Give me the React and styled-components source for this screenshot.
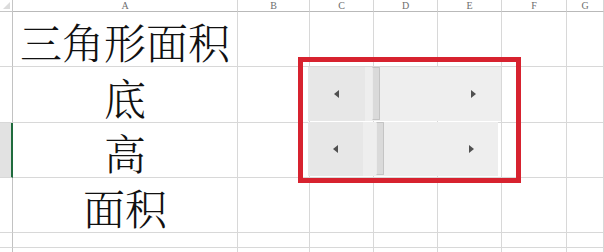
import React from 'react'
import styled, { createGlobalStyle } from 'styled-components'

const Global = createGlobalStyle`
  html, body {
    margin: 0;
    padding: 0;
    background: #fff;
  }
  * { box-sizing: border-box; }
`;

const Sheet = styled.div`
  position: relative;
  width: 604px;
  height: 252px;
  overflow: hidden;
  display: grid;
  grid-template-columns: 13px 225px 72px 64px 64px 64px 65px 1fr;
  grid-template-rows: 12px 55px 56px 55px 55px 15px 15px;
  background: #fff;
`;

const Corner = styled.div`
  display: flex;
  align-items: flex-end;
  justify-content: flex-end;
  padding: 0 2px 2px 0;
  border-right: 1px solid #c6c6c6;
  border-bottom: 1px solid #c6c6c6;
  &::after {
    content: '';
    border-left: 7px solid transparent;
    border-bottom: 7px solid #dcdcdc;
  }
`;

const ColHead = styled.div`
  border-right: 1px solid #d6d6d6;
  border-bottom: 1px solid #b9b9b9;
  font-family: "Liberation Serif", serif;
  font-size: 10px;
  line-height: 11px;
  color: #6e6e6e;
  text-align: center;
`;

const RowHead = styled.div`
  background: ${p => (p.$active ? '#e2e2e2' : '#fff')};
  border-right: ${p => (p.$active ? '2px solid #1f6b3d' : '1px solid #c2c2c2')};
  border-bottom: 1px solid #d8d8d8;
`;

const Cell = styled.div`
  border-right: 1px solid #d8d8d8;
  border-bottom: 1px solid #d8d8d8;
  display: flex;
  align-items: center;
  justify-content: center;
  font-family: "Noto Serif CJK SC", "Noto Sans CJK SC", serif;
  font-weight: 300;
  font-size: 42px;
  color: #111;
  line-height: 1;
  padding-top: 4px;
  white-space: nowrap;
`;

/* the red annotation frame with the two form scroll bars, laid over the sheet */
const Frame = styled.div`
  position: absolute;
  left: 298px;
  top: 57px;
  width: 223px;
  height: 126px;
  border: 5px solid #d7222f;
  padding: 5px 0 0 5px;
  display: flex;
  flex-direction: column;
  gap: 1px;
`;

const ScrollBar = styled.div`
  display: flex;
  width: ${p => p.$w}px;
  height: 54px;
  background: #eeeeee;
`;

const ArrowButton = styled.div`
  display: flex;
  align-items: center;
  justify-content: center;
  width: ${p => p.$w}px;
  background: #e7e7e7;
`;

const Track = styled.div`
  flex: 1;
  display: flex;
  align-items: center;
  justify-content: flex-end;
  padding-right: ${p => p.$pad}px;
`;

const Thumb = styled.div`
  width: 8px;
  margin-left: ${p => p.$offset}px;
  margin-bottom: 1px;
  background: #dadada;
  border: 1px solid #c4c4c4;
  border-left-color: #ebebeb;
  border-radius: 1px;
`;

const Arrow = styled.span`
  width: 0;
  height: 0;
  border-top: 4px solid transparent;
  border-bottom: 4px solid transparent;
  ${p => (p.$dir === 'left'
    ? 'border-right: 5px solid #505050;'
    : 'border-left: 5px solid #505050;')}
`;

const cols = ['A', 'B', 'C', 'D', 'E', 'F', 'G']
const rowText = ['三角形面积', '底', '高', '面积', '', '']

const bars = [
  { w: 193, btn: 57, gap: 7, pad: 25 },
  { w: 190, btn: 55, gap: 13, pad: 24 },
]

const App = () => {
  return (
    <>
      <Global />
      <Sheet>
        <Corner />
        {cols.map(c => (
          <ColHead key={c}>{c}</ColHead>
        ))}
        {rowText.map((t, r) => (
          <React.Fragment key={r}>
            <RowHead $active={r === 2} />
            <Cell>{t}</Cell>
            {cols.slice(1).map(c => (
              <Cell key={c} />
            ))}
          </React.Fragment>
        ))}

        <Frame>
          {bars.map((b, i) => (
            <ScrollBar key={i} $w={b.w}>
              <ArrowButton $w={b.btn}>
                <Arrow $dir="left" />
              </ArrowButton>
              <Thumb $offset={b.gap} />
              <Track $pad={b.pad}>
                <Arrow $dir="right" />
              </Track>
            </ScrollBar>
          ))}
        </Frame>
      </Sheet>
    </>
  )
}

export default App
